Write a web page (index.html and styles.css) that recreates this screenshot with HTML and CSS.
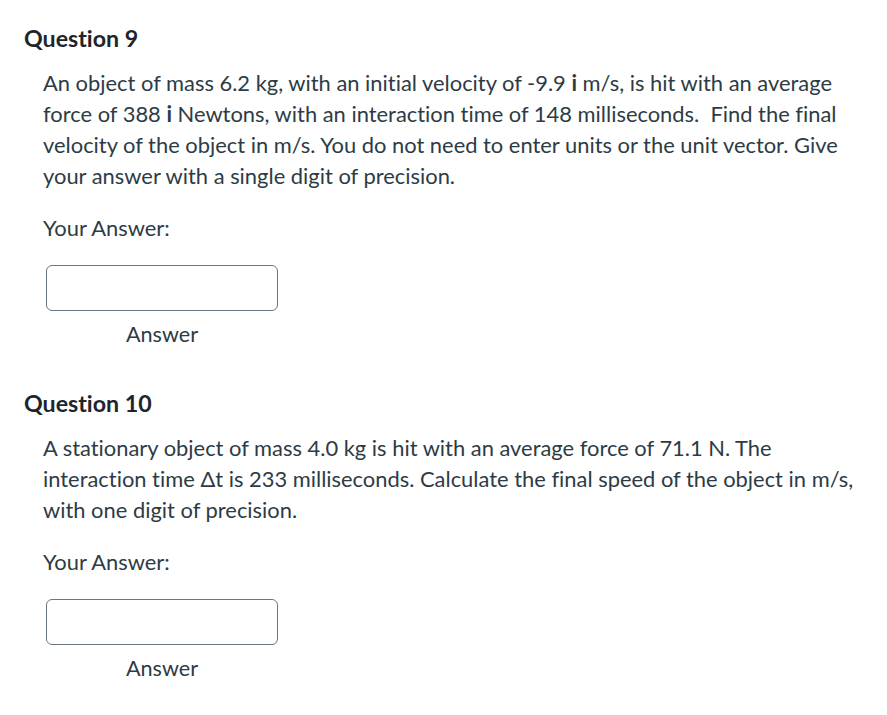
FILE: index.html
```html
<!DOCTYPE html>
<html>
<head>
<meta charset="utf-8">
<link rel="stylesheet" href="styles.css">
</head>
<body>
<div class="quiz">
  <section class="question">
    <h2 class="q-title">Question 9</h2>
    <div class="q-body">
      <p class="q-text">An object of mass 6.2 kg, with an initial velocity of -9.9 <b>i</b> m/s, is hit with an average force of 388 <b>i</b> Newtons, with an interaction time of 148 milliseconds.&nbsp; Find the final velocity of the object in m/s. You do not need to enter units or the unit vector. Give your answer with a single digit of precision.</p>
      <p class="your-answer">Your Answer:</p>
      <div class="answer-field">
        <div class="answer-box"></div>
        <div class="answer-label">Answer</div>
      </div>
    </div>
  </section>
  <section class="question">
    <h2 class="q-title">Question 10</h2>
    <div class="q-body">
      <p class="q-text">A stationary object of mass 4.0 kg is hit with an average force of 71.1 N. The interaction time Δt is 233 milliseconds. Calculate the final speed of the object in m/s, with one digit of precision.</p>
      <p class="your-answer">Your Answer:</p>
      <div class="answer-field">
        <div class="answer-box"></div>
        <div class="answer-label">Answer</div>
      </div>
    </div>
  </section>
</div>
</body>
</html>
```
FILE: styles.css
```css
html, body {
  margin: 0;
  padding: 0;
  background: #ffffff;
}
body {
  font-family: Lato, "Liberation Sans", sans-serif;
  color: #2d3b45;
  font-variant-ligatures: none;
}
.quiz {
  padding: 23px 0 0 24px;
}
.question {
  margin-bottom: 38px;
}
.q-title {
  margin: 0;
  font-size: 23.2px;
  line-height: 30px;
  font-weight: 700;
  color: #1e262b;
}
.q-body {
  padding-left: 19px;
  padding-right: 24px;
}
.q-text {
  margin: 14px 0 0 0;
  font-size: 21.9px;
  line-height: 31px;
}
.q-text b {
  font-weight: 700;
}
.your-answer {
  margin: 21px 0 0 0;
  font-size: 21.9px;
  line-height: 31px;
}
.answer-field {
  display: flex;
  flex-direction: column;
  align-items: center;
  width: 232px;
  margin: 22px 0 0 3px;
}
.answer-box {
  width: 230px;
  height: 44px;
  border: 1px solid #6b7780;
  border-radius: 6px;
  box-sizing: content-box;
  align-self: stretch;
}
.answer-label {
  margin-top: 8px;
  font-size: 21.6px;
  line-height: 31px;
}
```
